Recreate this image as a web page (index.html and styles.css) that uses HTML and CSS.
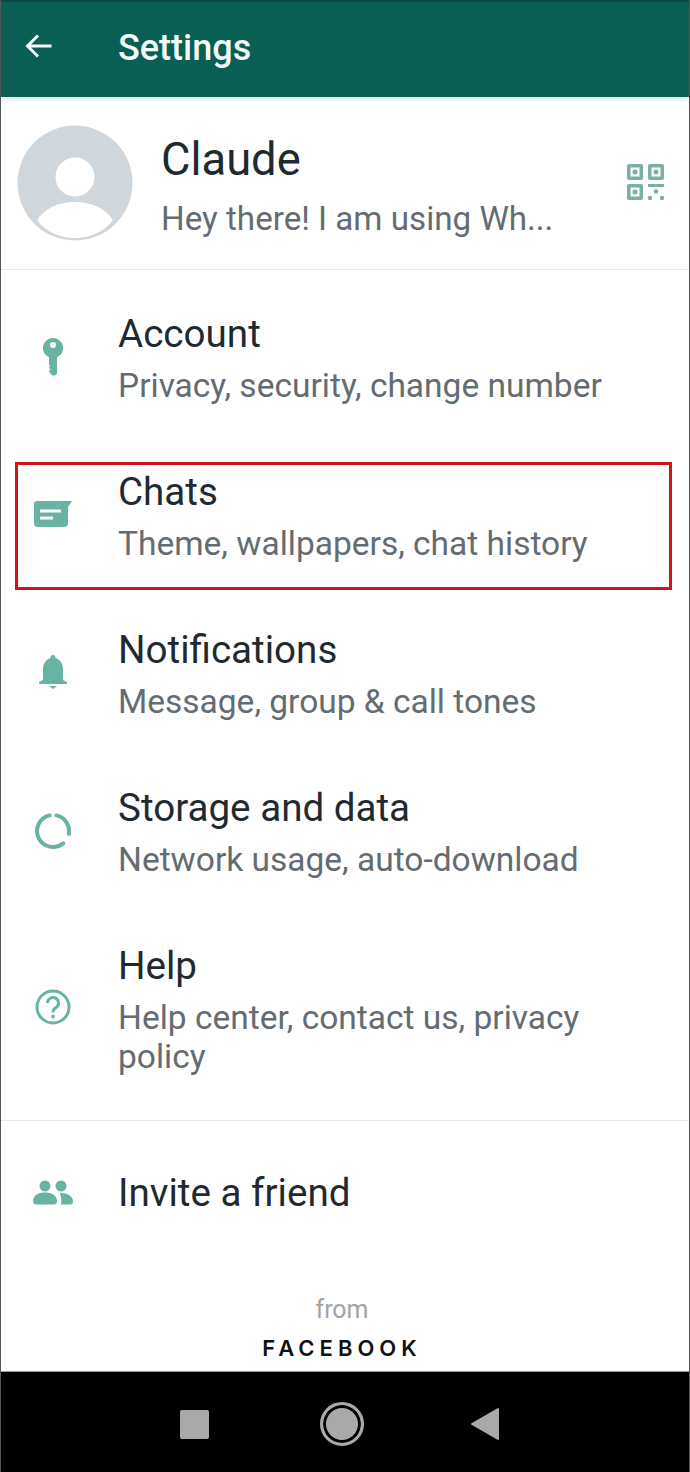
FILE: index.html
```html
<!DOCTYPE html>
<html lang="en">
<head>
    <meta charset="UTF-8">
    <meta name="viewport" content="width=device-width, initial-scale=1.0">
    <title>Settings</title>
    <link rel="stylesheet" href="styles.css">
</head>
<body>
<div class="screen">
    <header class="app-bar">
        <svg class="back" viewBox="0 0 30 30"><path d="M27.5 15H3.5M14 4.5 3.5 15 14 25.5" fill="none" stroke="#f2fbf8" stroke-width="3"/></svg>
        <h1>Settings</h1>
    </header>

    <!-- Profile -->
    <section class="profile">
        <svg class="avatar" viewBox="0 0 116 116">
            <circle cx="58" cy="58" r="57.5" fill="#cfd6dc"/>
            <circle cx="58" cy="52" r="19.5" fill="#fff"/>
            <path d="M20 95C28 83 42 77 58 77s30 6 38 18C87 107 73 113 58 113S29 107 20 95z" fill="#fff"/>
        </svg>
        <div class="profile-text">
            <div class="profile-name">Claude</div>
            <div class="profile-status">Hey there! I am using Wh...</div>
        </div>
        <svg class="qr" viewBox="0 0 38 38" fill="#79b0a3">
            <path fill-rule="evenodd" d="M2 0h12a2 2 0 0 1 2 2v12a2 2 0 0 1-2 2H2a2 2 0 0 1-2-2V2a2 2 0 0 1 2-2zm1.500 3.500v9h9v-9z"/>
            <path fill-rule="evenodd" d="M23 0h12a2 2 0 0 1 2 2v12a2 2 0 0 1-2 2H23a2 2 0 0 1-2-2V2a2 2 0 0 1 2-2zm1.500 3.500v9h9v-9z"/>
            <path fill-rule="evenodd" d="M2 20h12a2 2 0 0 1 2 2v12a2 2 0 0 1-2 2H2a2 2 0 0 1-2-2V22a2 2 0 0 1 2-2zm1.500 3.500v9h9v-9z"/>
            <circle cx="8" cy="8" r="2.500"/><circle cx="29" cy="8" r="2.500"/><circle cx="8" cy="28" r="2.500"/>
            <rect x="21" y="20" width="16" height="3"/>
            <circle cx="29" cy="27.500" r="2.200"/><circle cx="23" cy="34" r="2.200"/><circle cx="35" cy="34" r="2.200"/>
        </svg>
    </section>

    <!-- Menu -->
    <section class="menu">
        <div class="row">
            <div class="row-icon">
                <svg class="icon-key" viewBox="0 0 20 38" fill="#68b3a3"><path fill-rule="evenodd" d="M10 0a10 10 0 0 1 4 19.200V34a3 3 0 0 1-3 3.500H9.500L7 35l-1-2 1.500-1.500L6 30l1-2-1-1.500V19.200A10 10 0 0 1 10 0zm0 4a3 3 0 1 0 0 6 3 3 0 0 0 0-6z"/></svg>
            </div>
            <div class="row-text">
                <div class="row-title">Account</div>
                <div class="row-sub">Privacy, security, change number</div>
            </div>
        </div>
        <div class="row">
            <div class="highlight"></div>
            <div class="row-icon">
                <svg class="icon-chat" viewBox="0 0 38 26"><path d="M3 0h35l-4 6v16a4 4 0 0 1-4 4H4a4 4 0 0 1-4-4V3a3 3 0 0 1 3-3z" fill="#68b3a3"/><path d="M6 10h21M6 17h13" stroke="#fff" stroke-width="3.200" fill="none"/></svg>
            </div>
            <div class="row-text">
                <div class="row-title">Chats</div>
                <div class="row-sub">Theme, wallpapers, chat history</div>
            </div>
        </div>
        <div class="row">
            <div class="row-icon">
                <svg class="icon-bell" viewBox="0 0 28 34" fill="#68b3a3"><path d="M14 0a2.500 2.500 0 0 1 2.500 3C21 4.500 24 8.500 24 14v11l3 1.500a1.200 1.200 0 0 1 0 2.500H1a1.200 1.200 0 0 1 0-2.500L4 25V14c0-5.500 3-9.500 7.500-11A2.500 2.500 0 0 1 14 0z"/><path d="M10 31h8l-4 3z"/></svg>
            </div>
            <div class="row-text">
                <div class="row-title">Notifications</div>
                <div class="row-sub">Message, group &amp; call tones</div>
            </div>
        </div>
        <div class="row">
            <div class="row-icon">
                <svg class="icon-round" viewBox="0 0 36 36" fill="none" stroke="#68b3a3" stroke-width="4" stroke-linecap="round"><path d="M14.500 2.400A16 16 0 1 0 28.300 30.300"/><path d="M21.500 2.400A16 16 0 0 1 33.800 20.800"/></svg>
            </div>
            <div class="row-text">
                <div class="row-title">Storage and data</div>
                <div class="row-sub">Network usage, auto-download</div>
            </div>
        </div>
        <div class="row row-help">
            <div class="row-icon">
                <svg class="icon-round icon-help" viewBox="0 0 36 36" fill="none" stroke="#68b3a3" stroke-width="3"><circle cx="18" cy="18" r="16"/><path d="M12.500 14a5.500 5.500 0 1 1 8.500 4.600c-2 1.400-3 2.400-3 4.900"/><circle cx="18" cy="27.500" r="1.900" fill="#68b3a3" stroke="none"/></svg>
            </div>
            <div class="row-text">
                <div class="row-title">Help</div>
                <div class="row-sub">Help center, contact us, privacy policy</div>
            </div>
        </div>
    </section>

    <section class="invite">
        <div class="row-icon">
            <svg class="icon-people" viewBox="0 0 40 25" fill="#68b3a3"><circle cx="12" cy="6" r="5.500"/><circle cx="28" cy="6" r="5.500"/><path d="M0 21c0-6 6-8.500 12-8.500S24 15 24 21c0 2.500-1.500 3.500-3 3.500H3c-1.500 0-3-1-3-3.500z"/><path d="M27 13c6-.5 13 2.500 13 8.500 0 2-1 3-2.500 3H28c1-5-.5-8.500-1-11.500z"/></svg>
        </div>
        <div class="row-title">Invite a friend</div>
    </section>

    <footer class="brand">
        <div class="brand-from">from</div>
        <div class="brand-name">FACEBOOK</div>
    </footer>

    <nav class="nav-bar">
        <div class="nav-square"></div>
        <div class="nav-home"></div>
        <svg class="nav-back" viewBox="0 0 30 34"><path d="M28 2v30L2 17z" fill="#a9a9a9" stroke="#a9a9a9" stroke-width="2" stroke-linejoin="round"/></svg>
    </nav>
</div>
</body>
</html>
```

FILE: styles.css
```css
* {
    box-sizing: border-box;
}

html, body {
    margin: 0;
    padding: 0;
}

body {
    font-family: Roboto, "Liberation Sans", sans-serif;
    background-color: #fff;
}

.screen {
    width: 690px;
    height: 1472px;
    display: flex;
    flex-direction: column;
    border-left: 1px solid #555;
    border-right: 1px solid #555;
    overflow: hidden;
}

.app-bar {
    height: 97px;
    flex: none;
    display: flex;
    align-items: center;
    background-color: #0a5f55;
    border-top: 2px solid #0b4a43;
    box-shadow: 0 2px 5px rgba(0, 70, 60, 0.18);
    padding-bottom: 4px;
}

.back {
    width: 30px;
    height: 30px;
    margin-left: 23px;
    margin-bottom: 3px;
}

.app-bar h1 {
    margin: 0 0 0 64px;
    color: #f2fbf8;
    font-size: 36px;
    font-weight: 500;
}

.profile {
    height: 173px;
    flex: none;
    display: flex;
    align-items: center;
    border-bottom: 1px solid #e6e8e8;
    padding-left: 16px;
}

.avatar {
    width: 116px;
    height: 116px;
    flex: none;
}

.profile-text {
    margin-left: 28px;
    padding-top: 6px;
    flex: 1;
}

.profile-name {
    color: #1f2a30;
    font-size: 45.3px;
    line-height: 54px;
}

.profile-status {
    color: #646c72;
    font-size: 33.2px;
    line-height: 42px;
    margin-top: 11px;
}

.qr {
    width: 38px;
    height: 38px;
    margin-right: 24px;
}

.menu {
    padding-top: 5px;
    flex: none;
    border-bottom: 1px solid #e6e8e8;
}

.row {
    position: relative;
    height: 158px;
    display: flex;
    padding-top: 36px;
}

.row-help {
    height: 213px;
}

.row-icon {
    width: 117px;
    flex: none;
    display: flex;
    justify-content: center;
    padding-right: 13px;
}

.row-title {
    color: #1f2a30;
    font-size: 38.6px;
    line-height: 46px;
}

.row-sub {
    color: #646c72;
    font-size: 33.5px;
    line-height: 39px;
    margin-top: 9px;
    width: 500px;
}

.highlight {
    position: absolute;
    left: 14px;
    top: 29px;
    width: 657px;
    height: 128px;
    border: 3px solid #d3121f;
}

.icon-key {
    width: 20px;
    height: 38px;
    margin-top: 27px;
}

.icon-chat {
    width: 38px;
    height: 26px;
    margin-top: 32px;
}

.icon-bell {
    width: 28px;
    height: 34px;
    margin-top: 28px;
}

.icon-round {
    width: 36px;
    height: 36px;
    margin-top: 28px;
}

.icon-round.icon-help {
    margin-top: 46px;
}

.invite {
    height: 143px;
    flex: none;
    display: flex;
    align-items: center;
}

.icon-people {
    width: 40px;
    height: 25px;
}

.brand {
    flex: 1;
    text-align: center;
    padding-right: 6px;
}

.brand-from {
    color: #a3a3a3;
    font-size: 25px;
    line-height: 30px;
    margin-top: 31px;
}

.brand-name {
    color: #111;
    font-family: Inter, "Liberation Sans", sans-serif;
    font-weight: 600;
    font-size: 22px;
    letter-spacing: 5px;
    line-height: 28px;
    margin-top: 9px;
}

.nav-bar {
    height: 101px;
    flex: none;
    display: flex;
    align-items: center;
    background-color: #000;
    border-top: 1px solid #999;
    margin: 0 -1px;
    padding-left: 180px;
    padding-top: 4px;
}

.nav-square {
    width: 29px;
    height: 29px;
    background-color: #a9a9a9;
    border-radius: 2px;
}

.nav-home {
    width: 44px;
    height: 44px;
    margin-left: 111px;
    border-radius: 50%;
    background-color: #a9a9a9;
    border: 3px solid #a9a9a9;
    box-shadow: inset 0 0 0 3px #000;
}

.nav-back {
    width: 30px;
    height: 34px;
    margin-left: 106px;
}
```
